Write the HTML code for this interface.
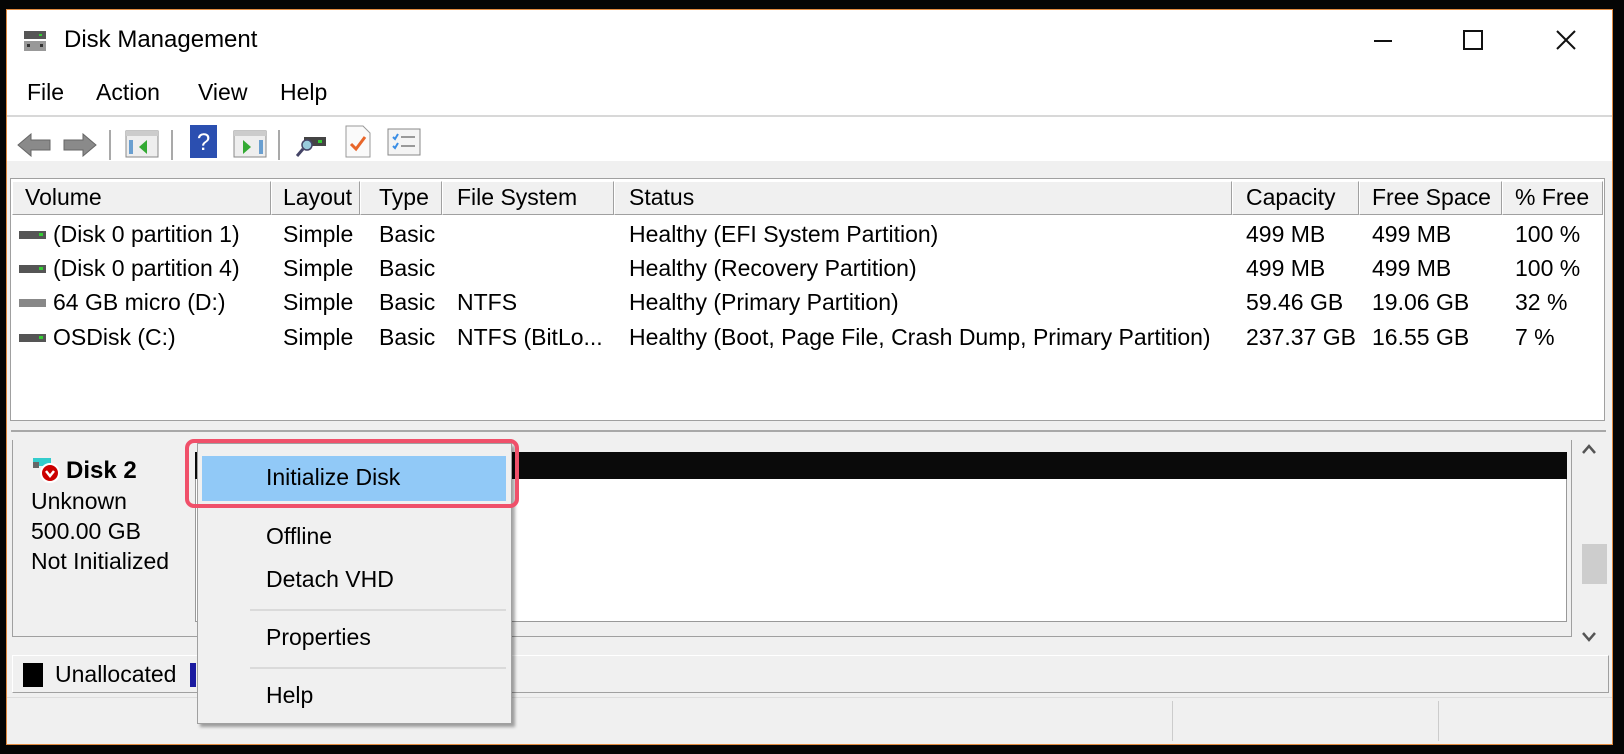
<!DOCTYPE html>
<html><head><meta charset="utf-8"><style>
*{margin:0;padding:0;box-sizing:border-box}
body{width:1624px;height:754px;background:#050505;position:relative;overflow:hidden;font-family:"Liberation Sans",sans-serif;font-size:23px;color:#000}
.a{position:absolute}
.win{left:6px;top:9px;width:1607px;height:736px;background:#f0f0f0;border:1px solid #e08a40}
.t{position:absolute;white-space:nowrap;line-height:1;margin-top:-2px}
.hd{position:absolute;top:181px;height:34px;background:#f0f0f0;border:1px solid #a0a0a0;border-top-color:#fff;border-left-color:#fff}
.sep{position:absolute;width:2px;background:#a9a9a9;top:130px;height:30px}
.mi{position:absolute;left:266px;font-size:23px;line-height:1;margin-top:-2px}
</style></head><body>
<div class="a win"></div>
<div class="a" style="left:7px;top:10px;width:1605px;height:106px;background:#fff"></div>
<svg class="a" style="left:22px;top:28px" width="26" height="26" viewBox="0 0 26 26"><rect x="2" y="3" width="22" height="8" fill="#555"/><rect x="17" y="6" width="3" height="2" fill="#3c3"/><rect x="2" y="13" width="22" height="10" fill="#999"/><rect x="5" y="16" width="3" height="3" fill="#333"/><rect x="18" y="16" width="3" height="3" fill="#333"/></svg>
<div class="t" style="left:64px;top:30px;font-size:24px">Disk Management</div>
<div class="a" style="left:1374px;top:40px;width:18px;height:2px;background:#111"></div>
<div class="a" style="left:1463px;top:30px;width:20px;height:20px;border:2px solid #111"></div>
<svg class="a" style="left:1556px;top:30px" width="20" height="20"><path d="M1 1L19 19M19 1L1 19" stroke="#111" stroke-width="2"/></svg>
<div class="t" style="left:27px;top:83px">File</div>
<div class="t" style="left:96px;top:83px">Action</div>
<div class="t" style="left:198px;top:83px">View</div>
<div class="t" style="left:280px;top:83px">Help</div>
<div class="a" style="left:7px;top:115px;width:1605px;height:2px;background:#d8d8d8"></div>
<div class="a" style="left:7px;top:117px;width:1605px;height:44px;background:#fff"></div>
<svg class="a" style="left:17px;top:133px" width="34" height="24"><path d="M1 12L14 1V7H33V17H14V23Z" fill="#8a8a8a" stroke="#666"/></svg>
<svg class="a" style="left:63px;top:133px" width="34" height="24"><path d="M33 12L20 1V7H1V17H20V23Z" fill="#8a8a8a" stroke="#666"/></svg>
<div class="sep" style="left:109px"></div>
<svg class="a" style="left:125px;top:130px" width="34" height="28"><rect x="1" y="1" width="32" height="26" fill="#eee" stroke="#888"/><rect x="1" y="1" width="32" height="5" fill="#ccc"/><rect x="4" y="10" width="4" height="14" fill="#6a9fd0"/><path d="M22 10L14 17L22 24Z" fill="#3a3"/></svg>
<div class="sep" style="left:171px"></div>
<svg class="a" style="left:190px;top:125px" width="27" height="33"><rect x="0" y="0" width="27" height="33" fill="#2b4fb0"/><text x="13.5" y="25" font-size="24" fill="#fff" text-anchor="middle" font-family="Liberation Sans">?</text></svg>
<svg class="a" style="left:233px;top:130px" width="34" height="28"><rect x="1" y="1" width="32" height="26" fill="#eee" stroke="#888"/><rect x="1" y="1" width="32" height="5" fill="#ccc"/><rect x="26" y="10" width="4" height="14" fill="#6a9fd0"/><path d="M10 10L18 17L10 24Z" fill="#3a3"/></svg>
<div class="sep" style="left:278px"></div>
<svg class="a" style="left:296px;top:133px" width="32" height="26"><rect x="8" y="4" width="22" height="9" fill="#444"/><rect x="22" y="7" width="4" height="3" fill="#3c3"/><circle cx="11" cy="12" r="5" fill="#9cd" stroke="#446" stroke-width="1.5"/><path d="M7 16L1 23" stroke="#446" stroke-width="3"/></svg>
<svg class="a" style="left:345px;top:125px" width="26" height="33"><path d="M1 1H18L25 8V32H1Z" fill="#fafafa" stroke="#999"/><path d="M6 19L11 24L20 12" stroke="#e8662a" stroke-width="3" fill="none"/></svg>
<svg class="a" style="left:387px;top:128px" width="34" height="28"><rect x="1" y="1" width="32" height="26" fill="#f4f4f4" stroke="#888"/><path d="M6 9L8 11L11 6M6 18L8 20L11 15" stroke="#3a8ee6" stroke-width="2" fill="none"/><path d="M14 9H28M14 18H28" stroke="#999" stroke-width="2"/></svg>
<div class="a" style="left:10px;top:178px;width:1595px;height:243px;background:#fff;border:1px solid #a0a0a0"></div>
<div class="hd" style="left:12px;width:259px"></div>
<div class="hd" style="left:271px;width:89px"></div>
<div class="hd" style="left:360px;width:82px"></div>
<div class="hd" style="left:442px;width:172px"></div>
<div class="hd" style="left:614px;width:618px"></div>
<div class="hd" style="left:1232px;width:127px"></div>
<div class="hd" style="left:1359px;width:143px"></div>
<div class="hd" style="left:1502px;width:101px"></div>
<div class="t" style="left:25px;top:188px">Volume</div>
<div class="t" style="left:283px;top:188px">Layout</div>
<div class="t" style="left:379px;top:188px">Type</div>
<div class="t" style="left:457px;top:188px">File System</div>
<div class="t" style="left:629px;top:188px">Status</div>
<div class="t" style="left:1246px;top:188px">Capacity</div>
<div class="t" style="left:1372px;top:188px">Free Space</div>
<div class="t" style="left:1515px;top:188px">% Free</div>
<div class="a" style="left:19px;top:231px;width:27px;height:8px;background:#555"></div><div class="a" style="left:39px;top:233px;width:4px;height:3px;background:#3c3"></div>
<div class="a" style="left:19px;top:265px;width:27px;height:8px;background:#555"></div><div class="a" style="left:39px;top:267px;width:4px;height:3px;background:#3c3"></div>
<div class="a" style="left:19px;top:299px;width:27px;height:8px;background:#888"></div>
<div class="a" style="left:19px;top:334px;width:27px;height:8px;background:#555"></div><div class="a" style="left:39px;top:336px;width:4px;height:3px;background:#3c3"></div>
<div class="t" style="left:53px;top:225px">(Disk 0 partition 1)</div><div class="t" style="left:283px;top:225px">Simple</div><div class="t" style="left:379px;top:225px">Basic</div><div class="t" style="left:629px;top:225px">Healthy (EFI System Partition)</div><div class="t" style="left:1246px;top:225px">499 MB</div><div class="t" style="left:1372px;top:225px">499 MB</div><div class="t" style="left:1515px;top:225px">100 %</div>
<div class="t" style="left:53px;top:259px">(Disk 0 partition 4)</div><div class="t" style="left:283px;top:259px">Simple</div><div class="t" style="left:379px;top:259px">Basic</div><div class="t" style="left:629px;top:259px">Healthy (Recovery Partition)</div><div class="t" style="left:1246px;top:259px">499 MB</div><div class="t" style="left:1372px;top:259px">499 MB</div><div class="t" style="left:1515px;top:259px">100 %</div>
<div class="t" style="left:53px;top:293px">64 GB micro (D:)</div><div class="t" style="left:283px;top:293px">Simple</div><div class="t" style="left:379px;top:293px">Basic</div><div class="t" style="left:457px;top:293px">NTFS</div><div class="t" style="left:629px;top:293px">Healthy (Primary Partition)</div><div class="t" style="left:1246px;top:293px">59.46 GB</div><div class="t" style="left:1372px;top:293px">19.06 GB</div><div class="t" style="left:1515px;top:293px">32 %</div>
<div class="t" style="left:53px;top:328px">OSDisk (C:)</div><div class="t" style="left:283px;top:328px">Simple</div><div class="t" style="left:379px;top:328px">Basic</div><div class="t" style="left:457px;top:328px">NTFS (BitLo...</div><div class="t" style="left:629px;top:328px">Healthy (Boot, Page File, Crash Dump, Primary Partition)</div><div class="t" style="left:1246px;top:328px">237.37 GB</div><div class="t" style="left:1372px;top:328px">16.55 GB</div><div class="t" style="left:1515px;top:328px">7 %</div>
<div class="a" style="left:11px;top:422px;width:1595px;height:10px;background:#f0f0f0;border-bottom:2px solid #a8a8a8"></div>
<div class="a" style="left:12px;top:440px;width:1560px;height:197px;border:1px solid #a0a0a0;border-top:none;background:#f0f0f0"></div>
<svg class="a" style="left:33px;top:458px" width="28" height="28"><rect x="0" y="0" width="18" height="8" fill="#3cc"/><rect x="0" y="4" width="6" height="6" fill="#666"/><circle cx="17" cy="15" r="9" fill="#c00" stroke="#fff" stroke-width="2"/><path d="M13 13L17 18L21 13" stroke="#fff" stroke-width="2.5" fill="none"/></svg>
<div class="t" style="left:66px;top:461px;font-weight:bold;font-size:24px">Disk 2</div>
<div class="t" style="left:31px;top:492px">Unknown</div>
<div class="t" style="left:31px;top:522px">500.00 GB</div>
<div class="t" style="left:31px;top:552px">Not Initialized</div>
<div class="a" style="left:195px;top:452px;width:1372px;height:170px;background:#fff;border:1px solid #999"></div>
<div class="a" style="left:195px;top:452px;width:1372px;height:27px;background:#0a0a0a"></div>
<div class="a" style="left:1574px;top:440px;width:30px;height:197px;background:#f0f0f0"></div>
<svg class="a" style="left:1580px;top:442px" width="18" height="14"><path d="M3 11L9 4L15 11" stroke="#555" stroke-width="2.5" fill="none"/></svg>
<div class="a" style="left:1582px;top:544px;width:25px;height:40px;background:#cdcdcd"></div>
<svg class="a" style="left:1580px;top:630px" width="18" height="14"><path d="M3 3L9 10L15 3" stroke="#555" stroke-width="2.5" fill="none"/></svg>
<div class="a" style="left:12px;top:655px;width:1597px;height:38px;background:#f0f0f0;border:1px solid #a0a0a0;border-top-color:#fff;border-left-color:#fff"></div>
<div class="a" style="left:23px;top:663px;width:20px;height:24px;background:#000"></div>
<div class="t" style="left:55px;top:665px">Unallocated</div>
<div class="a" style="left:190px;top:663px;width:6px;height:24px;background:#1a1aa0"></div>
<div class="a" style="left:7px;top:697px;width:1605px;height:47px;background:#f0f0f0;border-top:1px solid #ddd"></div>
<div class="a" style="left:1172px;top:701px;width:1px;height:40px;background:#ccc"></div>
<div class="a" style="left:1438px;top:701px;width:1px;height:40px;background:#ccc"></div>
<div class="a" style="left:197px;top:443px;width:315px;height:281px;background:#f0f0f0;border:1px solid #a0a0a0;box-shadow:3px 3px 3px rgba(0,0,0,.35)"></div>
<div class="a" style="left:202px;top:456px;width:304px;height:45px;background:#91c9f7"></div>
<div class="mi" style="top:468px">Initialize Disk</div>
<div class="mi" style="top:527px">Offline</div>
<div class="mi" style="top:570px">Detach VHD</div>
<div class="a" style="left:250px;top:609px;width:256px;height:2px;background:#dadada"></div>
<div class="mi" style="top:628px">Properties</div>
<div class="a" style="left:250px;top:667px;width:256px;height:2px;background:#dadada"></div>
<div class="mi" style="top:686px">Help</div>
<div class="a" style="left:185px;top:439px;width:334px;height:69px;border:4px solid #f0506a;border-radius:9px"></div>
</body></html>
